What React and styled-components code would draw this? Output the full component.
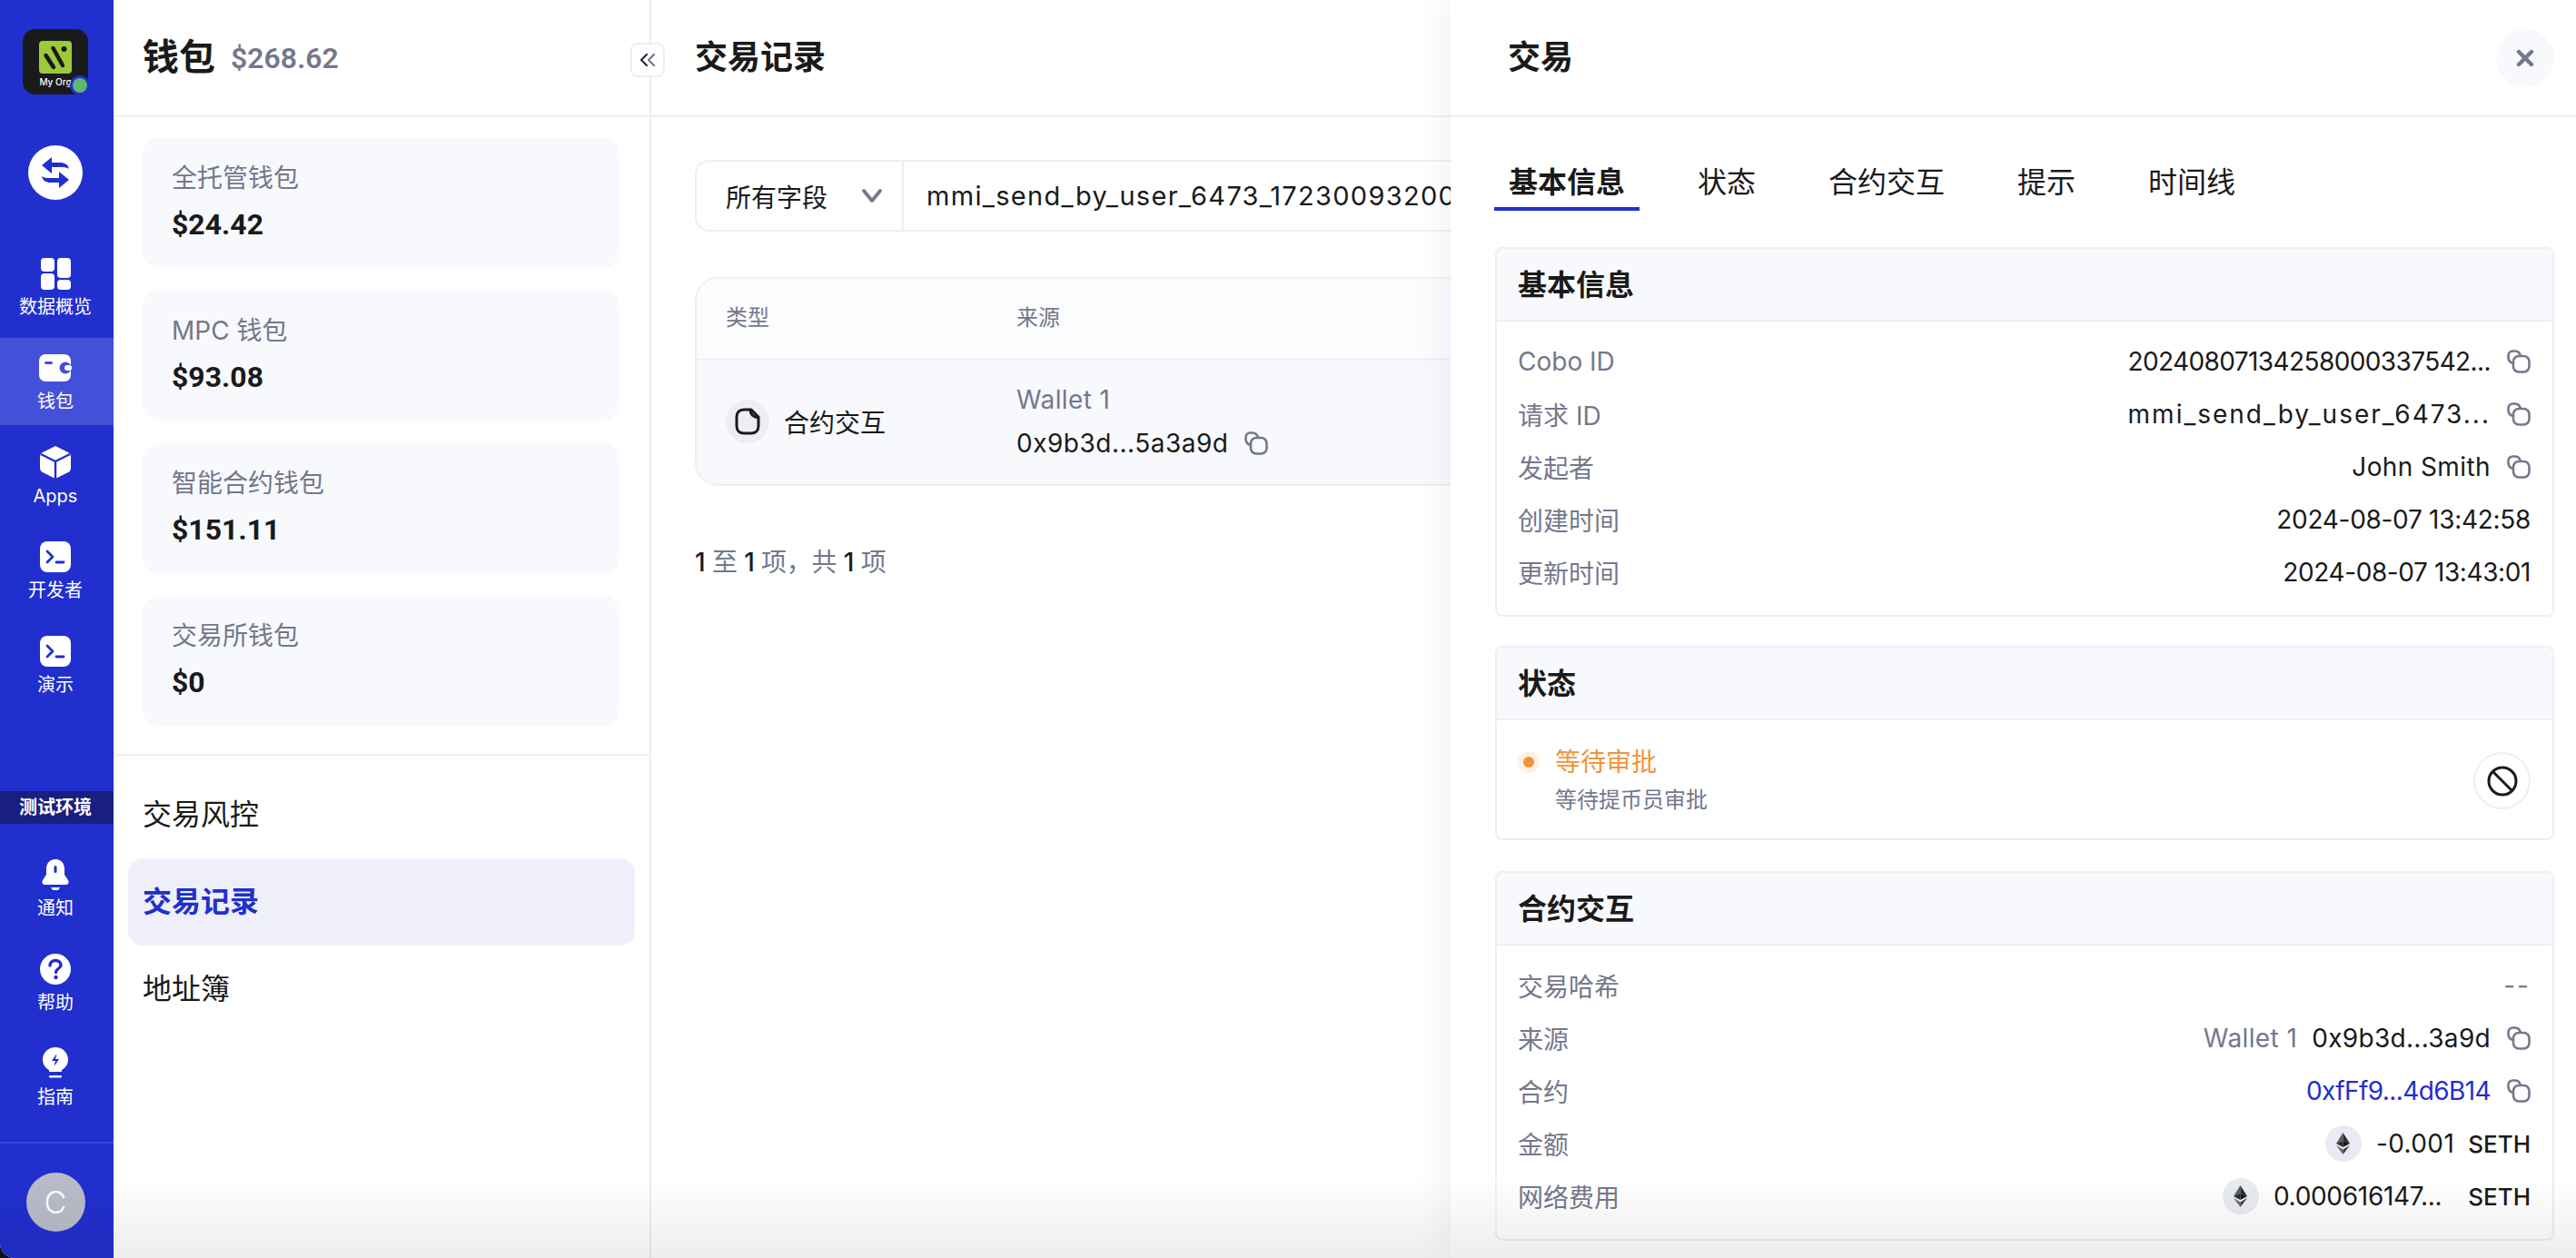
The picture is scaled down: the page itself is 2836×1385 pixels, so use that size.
import React from "react";
import styled, { createGlobalStyle } from "styled-components";

const BLUE = "#212fce";
const INK = "#1a1a1a";
const GREY = "#73788c";
const LINE = "#eeeef5";
const SOFT = "#f8f9fd";

const GlobalStyle = createGlobalStyle`
  html, body {
    margin: 0;
    padding: 0;
    background: #111;
    overflow: hidden;
  }
  * { box-sizing: border-box; }
  body {
    font-family: "Inter", "Noto Sans CJK SC", sans-serif;
    color: ${INK};
  }
`;

const Page = styled.div`
  position: relative;
  display: flex;
  width: 2836px;
  height: 1385px;
  overflow: hidden;
  background: #fff;
  border-bottom-left-radius: 16px;
`;

const Rail = styled.nav`
  flex: none;
  display: flex;
  flex-direction: column;
  align-items: center;
  width: 125px;
  padding-top: 32px;
  background: ${BLUE};
`;

const Logo = styled.div`
  position: relative;
  flex: none;
  display: flex;
  flex-direction: column;
  align-items: center;
  width: 72px;
  height: 72px;
  margin-right: 3px;
  padding-top: 13px;
  border-radius: 14px;
  background: #1a1a1a;
`;

const LogoText = styled.span`
  margin-top: 3px;
  font-size: 10px;
  line-height: 13px;
  font-weight: 500;
  color: #fff;
`;

const OrgBadge = styled.span`
  position: absolute;
  right: -2px;
  bottom: -1px;
  width: 22px;
  height: 22px;
  border: 3px solid ${BLUE};
  border-radius: 50%;
  background: #5cbb6c;
`;

const SwapButton = styled.div`
  flex: none;
  display: flex;
  align-items: center;
  justify-content: center;
  width: 60px;
  height: 60px;
  margin: 56px 3px 0 0;
  border-radius: 50%;
  background: #fff;
`;

const RailGroup = styled.div`
  display: flex;
  flex-direction: column;
  gap: 8px;
  width: 100%;
  margin-top: ${(p) => p.$top || 0}px;
`;

const RailItem = styled.div`
  display: flex;
  flex-direction: column;
  align-items: center;
  height: 96px;
  padding: 15px 3px 0 0;
  background: ${(p) => (p.$active ? "#4350d8" : "transparent")};
`;

const RailIcon = styled.div`
  display: flex;
  align-items: center;
  justify-content: center;
  height: 36px;
`;

const RailLabel = styled.span`
  margin-top: 5px;
  font-size: 20px;
  line-height: 28px;
  color: #fff;
`;

const EnvBanner = styled.div`
  width: 100%;
  height: 36px;
  margin-top: auto;
  margin-bottom: 23px;
  padding-right: 3px;
  font-size: 20px;
  font-weight: 600;
  line-height: 36px;
  text-align: center;
  color: #fff;
  background: #191f80;
`;

const RailFooter = styled.div`
  display: flex;
  justify-content: center;
  width: 100%;
  margin-top: 23px;
  padding: 32px 3px 29px 0;
  border-top: 2px solid #3b48d6;
`;

const Avatar = styled.div`
  width: 65px;
  height: 65px;
  border-radius: 50%;
  font-size: 34px;
  font-weight: 300;
  line-height: 65px;
  text-align: center;
  color: #fff;
  background: #b9bcc8;
`;

const Panel = styled.aside`
  flex: none;
  width: 592px;
  border-right: 2px solid ${LINE};
`;

const Header = styled.header`
  display: flex;
  align-items: center;
  justify-content: space-between;
  height: 129px;
  padding: ${(p) => p.$pad || "0 32px"};
  border-bottom: 2px solid ${LINE};
`;

const Title = styled.h1`
  margin: 0 0 7px;
  font-size: ${(p) => p.$size || 36}px;
  font-weight: 600;
  color: ${INK};
`;

const WalletHead = styled.div`
  display: flex;
  align-items: center;
  gap: 17px;
`;

const Balance = styled.span`
  font-family: "Roboto", sans-serif;
  font-size: 32px;
  font-weight: 600;
  color: ${GREY};
`;

const CardList = styled.div`
  display: flex;
  flex-direction: column;
  gap: 25px;
  padding: 23px 33px 31px 32px;
  border-bottom: 2px solid ${LINE};
`;

const Card = styled.div`
  height: 143px;
  padding: 26px 32px 0;
  border-radius: 18px;
  background: ${SOFT};
`;

const CardLabel = styled.div`
  font-size: 28px;
  line-height: 36px;
  color: ${GREY};
`;

const CardValue = styled.div`
  margin-top: 13px;
  font-family: "Roboto", sans-serif;
  font-size: 32px;
  line-height: 40px;
  font-weight: 700;
  color: ${INK};
`;

const Menu = styled.div`
  padding: 17px 16px;
`;

const MenuItem = styled.div`
  height: 96px;
  padding-left: 16px;
  border-radius: 16px;
  font-size: 32px;
  line-height: 96px;
  font-weight: ${(p) => (p.$active ? 600 : 400)};
  color: ${(p) => (p.$active ? BLUE : INK)};
  background: ${(p) => (p.$active ? "#eeeffa" : "transparent")};
`;

const CollapseButton = styled.div`
  position: absolute;
  left: 694px;
  top: 47px;
  display: flex;
  align-items: center;
  justify-content: center;
  width: 38px;
  height: 38px;
  border: 2px solid ${LINE};
  border-radius: 8px;
  background: #fff;
`;

const Main = styled.main`
  flex: 1;
  min-width: 0;
  overflow: hidden;
`;

const Content = styled.div`
  width: 1500px;
  padding: 47px 0 0 48px;
`;

const SearchBar = styled.div`
  display: flex;
  height: 79px;
  border: 2px solid ${LINE};
  border-radius: 16px;
`;

const SelectBox = styled.div`
  flex: none;
  display: flex;
  align-items: center;
  justify-content: space-between;
  width: 228px;
  padding: 0 22px 0 32px;
  border-right: 2px solid ${LINE};
  font-size: 28px;
`;

const SearchText = styled.div`
  padding-left: 25px;
  font-size: 29px;
  line-height: 75px;
  letter-spacing: 1.3px;
  white-space: nowrap;
`;

const Table = styled.div`
  margin-top: 50px;
  border: 2px solid ${LINE};
  border-radius: 26px;
  overflow: hidden;
`;

const TableRow = styled.div`
  display: grid;
  grid-template-columns: 320px 1fr;
  align-items: center;
  height: ${(p) => p.$h}px;
  padding: 0 0 ${(p) => p.$pb}px 32px;
  background: ${(p) => p.$bg};
  border-bottom: ${(p) => (p.$line ? `2px solid ${LINE}` : "none")};
`;

const ColHead = styled.span`
  font-size: 24px;
  color: ${GREY};
`;

const TypeCell = styled.div`
  display: flex;
  align-items: center;
  gap: 16px;
  font-size: 28px;
`;

const IconCircle = styled.span`
  display: flex;
  align-items: center;
  justify-content: center;
  width: ${(p) => p.$size}px;
  height: ${(p) => p.$size}px;
  border-radius: 50%;
  background: ${(p) => p.$bg};
`;

const SourceCell = styled.div`
  display: flex;
  flex-direction: column;
  gap: 12px;
  font-size: 28px;
  line-height: 36px;
`;

const SourceName = styled.span`
  letter-spacing: 0.4px;
  color: ${GREY};
`;

const Inline = styled.span`
  display: inline-flex;
  align-items: center;
  gap: ${(p) => p.$gap ?? 18}px;
`;

const Mono = styled.span`
  font-size: 28px;
  letter-spacing: ${(p) => p.$track ?? 0.4}px;
  white-space: nowrap;
  color: ${(p) => p.$color || INK};
`;

const Ticker = styled.span`
  font-size: 26px;
  font-weight: 500;
  color: ${INK};
`;

const Pager = styled.div`
  margin-top: 66px;
  font-size: 28px;
  line-height: 36px;
  letter-spacing: -0.3px;
  color: ${GREY};

  b {
    font-weight: 500;
    color: ${INK};
  }
`;

const Drawer = styled.section`
  position: absolute;
  top: 0;
  right: 0;
  bottom: 0;
  width: 1239px;
  background: #fff;
  box-shadow: -14px 0 28px rgba(20, 24, 60, 0.04);
`;

const CloseButton = styled.div`
  display: flex;
  align-items: center;
  justify-content: center;
  width: 64px;
  height: 64px;
  border-radius: 50%;
  background: ${SOFT};
`;

const Tabs = styled.div`
  display: flex;
  gap: 48px;
  height: 103px;
  padding: 39px 0 0 48px;
`;

const Tab = styled.div`
  height: 64px;
  padding: 0 16px;
  font-size: 32px;
  line-height: 65px;
  font-weight: ${(p) => (p.$active ? 600 : 400)};
  border-bottom: ${(p) => (p.$active ? `4px solid ${BLUE}` : "none")};
`;

const Sections = styled.div`
  display: flex;
  flex-direction: column;
  gap: 32px;
  margin-top: 40px;
  padding: 0 24px 0 49px;
`;

const Section = styled.div`
  margin-bottom: ${(p) => p.$after || 0}px;
  border: 2px solid ${LINE};
  border-radius: 8px;
  overflow: hidden;
`;

const SectionHead = styled.div`
  height: 80px;
  padding-left: 23px;
  font-size: 32px;
  line-height: 80px;
  font-weight: 600;
  background: ${SOFT};
  border-bottom: 2px solid ${LINE};
`;

const SectionBody = styled.div`
  padding: 15px 24px 18px 23px;
`;

const InfoRow = styled.div`
  display: flex;
  align-items: center;
  justify-content: space-between;
  height: 58px;
`;

const InfoLabel = styled.span`
  font-size: 28px;
  color: ${GREY};
`;

const StatusBody = styled.div`
  display: flex;
  align-items: center;
  justify-content: space-between;
  padding: 28px 24px 25px 23px;
`;

const StatusTitle = styled.div`
  display: flex;
  align-items: center;
  gap: 17px;
  font-size: 28px;
  line-height: 36px;
  color: #f2933a;
`;

const StatusDot = styled.span`
  display: flex;
  align-items: center;
  justify-content: center;
  width: 24px;
  height: 24px;
  border-radius: 50%;
  background: #fdf1e6;

  &::after {
    content: "";
    width: 12px;
    height: 12px;
    border-radius: 50%;
    background: #f2933a;
  }
`;

const StatusNote = styled.div`
  margin: 7px 0 0 41px;
  font-size: 24px;
  line-height: 34px;
  color: ${GREY};
`;

const CancelButton = styled.div`
  display: flex;
  align-items: center;
  justify-content: center;
  width: 63px;
  height: 63px;
  border: 2px solid ${LINE};
  border-radius: 50%;
`;

const BottomFade = styled.div`
  position: absolute;
  left: 0;
  right: 0;
  bottom: 0;
  height: 90px;
  pointer-events: none;
  background: linear-gradient(to bottom, rgba(0, 0, 0, 0), rgba(0, 0, 0, 0.07));
`;

const DashIcon = () => (
  <svg width="33" height="35" viewBox="0 0 33 35" fill="#fff">
    <rect x="0" y="0" width="15" height="15" rx="4" />
    <rect x="0" y="17" width="15" height="18" rx="4" />
    <rect x="18" y="0" width="15" height="22" rx="4" />
    <rect x="18" y="24" width="15" height="11" rx="4" />
  </svg>
);

const WalletIcon = () => (
  <svg width="36" height="30" viewBox="0 0 36 30">
    <rect width="35" height="30" rx="7" fill="#fff" />
    <rect x="6" y="8" width="9" height="3" rx="1.5" fill="#4350d8" />
    <circle cx="29" cy="15" r="6.5" fill="#4350d8" />
    <rect x="28" y="12" width="8" height="6" rx="3" fill="#fff" />
  </svg>
);

const CubeIcon = () => (
  <svg width="34" height="36" viewBox="0 0 34 36">
    <path
      d="M17 0 L31 7 Q34 8.5 34 12 V24 Q34 27.5 31 29 L17 36 L3 29 Q0 27.5 0 24 V12 Q0 8.5 3 7 Z"
      fill="#fff"
    />
    <path d="M1 9 L17 17 L33 9 M17 17 V36" fill="none" stroke={BLUE} strokeWidth="2.4" />
  </svg>
);

const TerminalIcon = () => (
  <svg width="34" height="34" viewBox="0 0 34 34">
    <rect width="34" height="34" rx="8" fill="#fff" />
    <path d="M8 11 L14 17 L8 23" fill="none" stroke={BLUE} strokeWidth="2.8" strokeLinecap="round" strokeLinejoin="round" />
    <path d="M18 23 H26" stroke={BLUE} strokeWidth="2.8" strokeLinecap="round" />
  </svg>
);

const BellIcon = () => (
  <svg width="30" height="35" viewBox="0 0 30 35">
    <path
      d="M15 0 C8 0 5 5 5 11 V17 L1 23 C-0.5 26 1 28 4 28 H26 C29 28 30.5 26 29 23 L25 17 V11 C25 5 22 0 15 0 Z"
      fill="#fff"
    />
    <rect x="13.5" y="7" width="3" height="8" rx="1.5" fill={BLUE} />
    <path d="M10 31 H20 L18 34 H12 Z" fill="#fff" />
  </svg>
);

const HelpIcon = () => (
  <svg width="34" height="34" viewBox="0 0 34 34">
    <circle cx="17" cy="17" r="17" fill="#fff" />
    <path
      d="M11 13 C11 9 14 7.5 17 7.5 C21 7.5 23 10 23 12.5 C23 16.5 17.5 16.5 17.5 20.5"
      fill="none"
      stroke={BLUE}
      strokeWidth="3.4"
      strokeLinecap="round"
    />
    <circle cx="17.5" cy="26" r="2.2" fill={BLUE} />
  </svg>
);

const BulbIcon = () => (
  <svg width="28" height="36" viewBox="0 0 28 36">
    <path
      d="M14 0 C6 0 0 6 0 13.5 C0 19 3 22.5 7 25 V27 H21 V25 C25 22.5 28 19 28 13.5 C28 6 22 0 14 0 Z"
      fill="#fff"
    />
    <path d="M15.5 7 L10 15 H14 L12.5 21 L18 13 H14 Z" fill={BLUE} />
    <rect x="7" y="31" width="14" height="2.5" rx="1.2" fill="#fff" />
  </svg>
);

const SwapIcon = () => (
  <svg width="30" height="34" viewBox="0 0 30 34" fill={BLUE}>
    <path d="M0 9 L11 0 V6 H20 C25 6 29 8 30 13 C27 11 24 11 20 11 H11 V18 Z" />
    <path d="M30 25 L19 34 V28 H10 C5 28 1 26 0 21 C3 23 6 23 10 23 H19 V16 Z" />
  </svg>
);

const CopyIcon = () => (
  <svg width="26" height="26" viewBox="0 0 26 26" fill="none" stroke={GREY} strokeWidth="2.6">
    <rect x="7" y="7" width="17.5" height="17.5" rx="6" />
    <path d="M7 15 C3 14 1.5 12 1.5 8.5 V6.5 C1.5 3.5 3.5 1.5 6.5 1.5 H9 C12 1.5 14 3 15 7" />
  </svg>
);

const DocIcon = () => (
  <svg width="28" height="30" viewBox="0 0 28 30" fill="none" stroke="#1a1a1a" strokeWidth="3">
    <path d="M18 2 H10 C5 2 2 5 2 10 V20 C2 25 5 28 10 28 H18 C23 28 26 25 26 20 V10 Z" strokeLinejoin="round" />
    <path d="M17 2 C17 7 20 10 26 11" />
  </svg>
);

const EthIcon = () => (
  <svg width="15" height="24" viewBox="0 0 15 24">
    <path d="M7.5 0 L0 12 L7.5 9 Z" fill="#5a5a5f" />
    <path d="M7.5 0 L15 12 L7.5 9 Z" fill="#2c2c30" />
    <path d="M0 12 L7.5 9 L7.5 16 Z" fill="#2c2c30" />
    <path d="M15 12 L7.5 9 L7.5 16 Z" fill="#16161a" />
    <path d="M0 14 L7.5 24 V18.5 Z" fill="#6a6a70" />
    <path d="M15 14 L7.5 24 V18.5 Z" fill="#3a3a40" />
  </svg>
);

const Chevron = () => (
  <svg width="22" height="15" viewBox="0 0 22 15" fill="none" stroke={GREY} strokeWidth="3.8" strokeLinecap="round" strokeLinejoin="round">
    <path d="M2 2 L11 13 L20 2" />
  </svg>
);

const DoubleChevron = () => (
  <svg width="20" height="16" viewBox="0 0 20 16" fill="none" strokeWidth="2.2" strokeLinecap="round" strokeLinejoin="round">
    <path d="M9 2 L3 8 L9 14" stroke="#2a2a30" />
    <path d="M17 2 L11 8 L17 14" stroke={GREY} />
  </svg>
);

const CloseIcon = () => (
  <svg width="20" height="20" viewBox="0 0 20 20" stroke={GREY} strokeWidth="4.4" strokeLinecap="round">
    <path d="M3 3 L17 17 M17 3 L3 17" />
  </svg>
);

const BanIcon = () => (
  <svg width="34" height="34" viewBox="0 0 34 34" fill="none" stroke="#1a1a1a" strokeWidth="3">
    <circle cx="17" cy="17" r="15" />
    <path d="M6.5 6.5 L27.5 27.5" />
  </svg>
);

const LogoMark = () => (
  <svg width="36" height="36" viewBox="0 0 36 36">
    <rect width="36" height="36" rx="4" fill="#9dc93c" />
    <g stroke="#1a1a1a" strokeWidth="4.5" strokeLinecap="round">
      <path d="M7.5 16 L16 29" />
      <path d="M15.5 8 L26 27" />
    </g>
    <circle cx="27.5" cy="9" r="3" fill="#1a1a1a" />
  </svg>
);

const wallets = [
  { name: "全托管钱包", value: "$24.42" },
  { name: "MPC 钱包", value: "$93.08" },
  { name: "智能合约钱包", value: "$151.11" },
  { name: "交易所钱包", value: "$0" },
];

const topNav = [
  { label: "数据概览", icon: <DashIcon /> },
  { label: "钱包", icon: <WalletIcon />, active: true },
  { label: "Apps", icon: <CubeIcon /> },
  { label: "开发者", icon: <TerminalIcon /> },
  { label: "演示", icon: <TerminalIcon /> },
];

const bottomNav = [
  { label: "通知", icon: <BellIcon /> },
  { label: "帮助", icon: <HelpIcon /> },
  { label: "指南", icon: <BulbIcon /> },
];

function NavItems({ items }) {
  return items.map((item) => (
    <RailItem key={item.label} $active={item.active}>
      <RailIcon>{item.icon}</RailIcon>
      <RailLabel>{item.label}</RailLabel>
    </RailItem>
  ));
}

function TokenAmount({ amount, track, gap }) {
  return (
    <Inline $gap={16}>
      <IconCircle $size={40} $bg="#e9ebf2">
        <EthIcon />
      </IconCircle>
      <Inline $gap={gap}>
        <Mono $track={track}>{amount}</Mono>
        <Ticker>SETH</Ticker>
      </Inline>
    </Inline>
  );
}

export default function App() {
  return (
    <Page>
      <GlobalStyle />
      <Rail>
        <Logo>
          <LogoMark />
          <LogoText>My Org</LogoText>
          <OrgBadge />
        </Logo>
        <SwapButton>
          <SwapIcon />
        </SwapButton>
        <RailGroup $top={48}>
          <NavItems items={topNav} />
        </RailGroup>
        <EnvBanner>测试环境</EnvBanner>
        <RailGroup>
          <NavItems items={bottomNav} />
        </RailGroup>
        <RailFooter>
          <Avatar>C</Avatar>
        </RailFooter>
      </Rail>

      <Panel>
        <Header>
          <WalletHead>
            <Title $size={40}>钱包</Title>
            <Balance>$268.62</Balance>
          </WalletHead>
        </Header>
        <CardList>
          {wallets.map((w) => (
            <Card key={w.name}>
              <CardLabel>{w.name}</CardLabel>
              <CardValue>{w.value}</CardValue>
            </Card>
          ))}
        </CardList>
        <Menu>
          <MenuItem>交易风控</MenuItem>
          <MenuItem $active>交易记录</MenuItem>
          <MenuItem>地址簿</MenuItem>
        </Menu>
      </Panel>

      <CollapseButton>
        <DoubleChevron />
      </CollapseButton>

      <Main>
        <Header $pad="0 48px">
          <Title>交易记录</Title>
        </Header>
        <Content>
          <SearchBar>
            <SelectBox>
              所有字段
              <Chevron />
            </SelectBox>
            <SearchText>mmi_send_by_user_6473_1723009320000</SearchText>
          </SearchBar>
          <Table>
            <TableRow $h={90} $pb={7} $bg="#fbfcfe" $line>
              <ColHead>类型</ColHead>
              <ColHead>来源</ColHead>
            </TableRow>
            <TableRow $h={136} $pb={3} $bg={SOFT}>
              <TypeCell>
                <IconCircle $size={48} $bg="#eceef2">
                  <DocIcon />
                </IconCircle>
                合约交互
              </TypeCell>
              <SourceCell>
                <SourceName>Wallet 1</SourceName>
                <Inline>
                  <Mono $track={0.5}>0x9b3d...5a3a9d</Mono>
                  <CopyIcon />
                </Inline>
              </SourceCell>
            </TableRow>
          </Table>
          <Pager>
            <b>1</b> 至 <b>1</b> 项，共 <b>1</b> 项
          </Pager>
        </Content>
      </Main>

      <Drawer>
        <Header $pad="0 24px 0 63px">
          <Title>交易</Title>
          <CloseButton>
            <CloseIcon />
          </CloseButton>
        </Header>
        <Tabs>
          <Tab $active>基本信息</Tab>
          <Tab>状态</Tab>
          <Tab>合约交互</Tab>
          <Tab>提示</Tab>
          <Tab>时间线</Tab>
        </Tabs>
        <Sections>
          <Section>
            <SectionHead>基本信息</SectionHead>
            <SectionBody>
              <InfoRow>
                <InfoLabel>Cobo ID</InfoLabel>
                <Inline>
                  <Mono $track={-0.6}>20240807134258000337542...</Mono>
                  <CopyIcon />
                </Inline>
              </InfoRow>
              <InfoRow>
                <InfoLabel>请求 ID</InfoLabel>
                <Inline>
                  <Mono $track={2}>mmi_send_by_user_6473...</Mono>
                  <CopyIcon />
                </Inline>
              </InfoRow>
              <InfoRow>
                <InfoLabel>发起者</InfoLabel>
                <Inline>
                  <Mono>John Smith</Mono>
                  <CopyIcon />
                </Inline>
              </InfoRow>
              <InfoRow>
                <InfoLabel>创建时间</InfoLabel>
                <Mono $track={-0.3}>2024-08-07 13:42:58</Mono>
              </InfoRow>
              <InfoRow>
                <InfoLabel>更新时间</InfoLabel>
                <Mono $track={-0.4}>2024-08-07 13:43:01</Mono>
              </InfoRow>
            </SectionBody>
          </Section>

          <Section $after={2}>
            <SectionHead>状态</SectionHead>
            <StatusBody>
              <div>
                <StatusTitle>
                  <StatusDot />
                  等待审批
                </StatusTitle>
                <StatusNote>等待提币员审批</StatusNote>
              </div>
              <CancelButton>
                <BanIcon />
              </CancelButton>
            </StatusBody>
          </Section>

          <Section>
            <SectionHead>合约交互</SectionHead>
            <SectionBody>
              <InfoRow>
                <InfoLabel>交易哈希</InfoLabel>
                <Mono $track={2} $color={GREY}>--</Mono>
              </InfoRow>
              <InfoRow>
                <InfoLabel>来源</InfoLabel>
                <Inline>
                  <Inline $gap={16}>
                    <Mono $color={GREY}>Wallet 1</Mono>
                    <Mono $track={0.3}>0x9b3d...3a9d</Mono>
                  </Inline>
                  <CopyIcon />
                </Inline>
              </InfoRow>
              <InfoRow>
                <InfoLabel>合约</InfoLabel>
                <Inline>
                  <Mono $track={-0.6} $color={BLUE}>0xfFf9...4d6B14</Mono>
                  <CopyIcon />
                </Inline>
              </InfoRow>
              <InfoRow>
                <InfoLabel>金额</InfoLabel>
                <TokenAmount amount="-0.001" track={0.4} gap={15} />
              </InfoRow>
              <InfoRow>
                <InfoLabel>网络费用</InfoLabel>
                <TokenAmount amount="0.000616147..." track={-0.3} gap={29} />
              </InfoRow>
            </SectionBody>
          </Section>
        </Sections>
      </Drawer>

      <BottomFade />
    </Page>
  );
}
